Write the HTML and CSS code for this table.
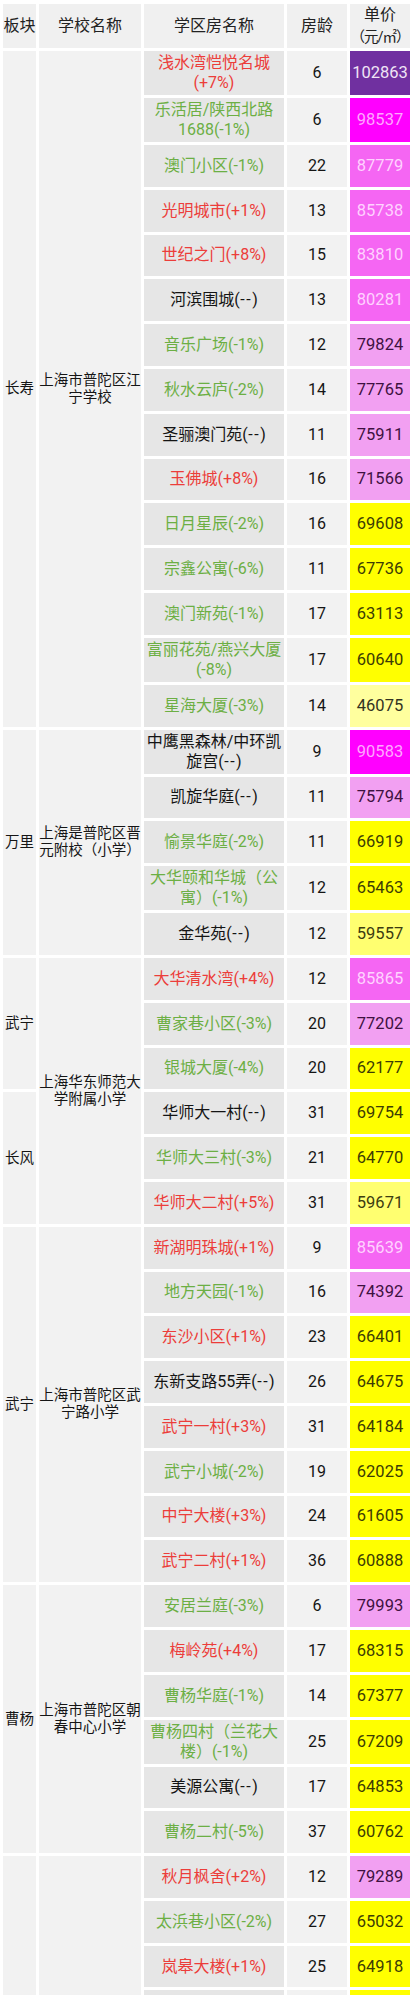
FILE: index.html
```html
<!DOCTYPE html>
<html lang="zh-CN">
<head>
<meta charset="utf-8">
<title>普陀区学区房</title>
<link rel="stylesheet" href="styles.css">
</head>
<body>
<div class="t">
  <div class="h c1">板块</div>
  <div class="h c2">学校名称</div>
  <div class="h c3">学区房名称</div>
  <div class="h c4">房龄</div>
  <div class="h c5"><span class="uw">单价<br><span class="u">（元/㎡）</span></span></div>

  <!-- 长寿 -->
  <div class="c1 s15">长寿</div>
  <div class="c2 s15"><span class="w">上海市普陀区江<br>宁学校</span></div>
  <div class="c3 up"><span class="w">浅水湾恺悦名城<br>(+7%)</span></div><div class="c4">6</div><div class="c5 p1">102863</div>
  <div class="c3 dn"><span class="w">乐活居/陕西北路<br>1688(-1%)</span></div><div class="c4">6</div><div class="c5 p2">98537</div>
  <div class="c3 dn">澳门小区(-1%)</div><div class="c4">22</div><div class="c5 p3">87779</div>
  <div class="c3 up">光明城市(+1%)</div><div class="c4">13</div><div class="c5 p3">85738</div>
  <div class="c3 up">世纪之门(+8%)</div><div class="c4">15</div><div class="c5 p3">83810</div>
  <div class="c3 eq"><span>河滨围城(<span class="dd">--</span>)</span></div><div class="c4">13</div><div class="c5 p3">80281</div>
  <div class="c3 dn">音乐广场(-1%)</div><div class="c4">12</div><div class="c5 p4">79824</div>
  <div class="c3 dn">秋水云庐(-2%)</div><div class="c4">14</div><div class="c5 p4">77765</div>
  <div class="c3 eq"><span>圣骊澳门苑(<span class="dd">--</span>)</span></div><div class="c4">11</div><div class="c5 p4">75911</div>
  <div class="c3 up">玉佛城(+8%)</div><div class="c4">16</div><div class="c5 p4">71566</div>
  <div class="c3 dn">日月星辰(-2%)</div><div class="c4">16</div><div class="c5 y1">69608</div>
  <div class="c3 dn">宗鑫公寓(-6%)</div><div class="c4">11</div><div class="c5 y1">67736</div>
  <div class="c3 dn">澳门新苑(-1%)</div><div class="c4">17</div><div class="c5 y1">63113</div>
  <div class="c3 dn"><span class="w">富丽花苑/燕兴大厦<br>(-8%)</span></div><div class="c4">17</div><div class="c5 y1">60640</div>
  <div class="c3 dn">星海大厦(-3%)</div><div class="c4">14</div><div class="c5 y3">46075</div>

  <!-- 万里 -->
  <div class="c1 s5">万里</div>
  <div class="c2 s5"><span class="w">上海是普陀区晋<br>元附校（小学）</span></div>
  <div class="c3 eq"><span class="w">中鹰黑森林/中环凯<br>旋宫(<span class="dd">--</span>)</span></div><div class="c4">9</div><div class="c5 p2">90583</div>
  <div class="c3 eq"><span>凯旋华庭(<span class="dd">--</span>)</span></div><div class="c4">11</div><div class="c5 p4">75794</div>
  <div class="c3 dn">愉景华庭(-2%)</div><div class="c4">11</div><div class="c5 y1">66919</div>
  <div class="c3 dn"><span class="w">大华颐和华城（公<br>寓）(-1%)</span></div><div class="c4">12</div><div class="c5 y1">65463</div>
  <div class="c3 eq"><span>金华苑(<span class="dd">--</span>)</span></div><div class="c4">12</div><div class="c5 y2">59557</div>

  <!-- 武宁 / 长风 -->
  <div class="c1 s3">武宁</div>
  <div class="c2 s6"><span class="w">上海华东师范大<br>学附属小学</span></div>
  <div class="c3 up">大华清水湾(+4%)</div><div class="c4">12</div><div class="c5 p3">85865</div>
  <div class="c3 dn">曹家巷小区(-3%)</div><div class="c4">20</div><div class="c5 p4">77202</div>
  <div class="c3 dn">银城大厦(-4%)</div><div class="c4">20</div><div class="c5 y1">62177</div>
  <div class="c1 s3">长风</div>
  <div class="c3 eq"><span>华师大一村(<span class="dd">--</span>)</span></div><div class="c4">31</div><div class="c5 y1">69754</div>
  <div class="c3 dn">华师大三村(-3%)</div><div class="c4">21</div><div class="c5 y1">64770</div>
  <div class="c3 up">华师大二村(+5%)</div><div class="c4">31</div><div class="c5 y2">59671</div>

  <!-- 武宁 -->
  <div class="c1 s8">武宁</div>
  <div class="c2 s8"><span class="w">上海市普陀区武<br>宁路小学</span></div>
  <div class="c3 up">新湖明珠城(+1%)</div><div class="c4">9</div><div class="c5 p3">85639</div>
  <div class="c3 dn">地方天园(-1%)</div><div class="c4">16</div><div class="c5 p4">74392</div>
  <div class="c3 up">东沙小区(+1%)</div><div class="c4">23</div><div class="c5 y1">66401</div>
  <div class="c3 eq"><span>东新支路55弄(<span class="dd">--</span>)</span></div><div class="c4">26</div><div class="c5 y1">64675</div>
  <div class="c3 up">武宁一村(+3%)</div><div class="c4">31</div><div class="c5 y1">64184</div>
  <div class="c3 dn">武宁小城(-2%)</div><div class="c4">19</div><div class="c5 y1">62025</div>
  <div class="c3 up">中宁大楼(+3%)</div><div class="c4">24</div><div class="c5 y1">61605</div>
  <div class="c3 up">武宁二村(+1%)</div><div class="c4">36</div><div class="c5 y1">60888</div>

  <!-- 曹杨 -->
  <div class="c1 s6">曹杨</div>
  <div class="c2 s6"><span class="w">上海市普陀区朝<br>春中心小学</span></div>
  <div class="c3 dn">安居兰庭(-3%)</div><div class="c4">6</div><div class="c5 p4">79993</div>
  <div class="c3 up">梅岭苑(+4%)</div><div class="c4">17</div><div class="c5 y1">68315</div>
  <div class="c3 dn">曹杨华庭(-1%)</div><div class="c4">14</div><div class="c5 y1">67377</div>
  <div class="c3 dn"><span class="w">曹杨四村（兰花大<br>楼）(-1%)</span></div><div class="c4">25</div><div class="c5 y1">67209</div>
  <div class="c3 eq"><span>美源公寓(<span class="dd">--</span>)</span></div><div class="c4">17</div><div class="c5 y1">64853</div>
  <div class="c3 dn">曹杨二村(-5%)</div><div class="c4">37</div><div class="c5 y1">60762</div>

  <!-- next group (cut off at the bottom) -->
  <div class="c1 s4"></div>
  <div class="c2 s4"></div>
  <div class="c3 up">秋月枫舍(+2%)</div><div class="c4">12</div><div class="c5 p4">79289</div>
  <div class="c3 dn">太浜巷小区(-2%)</div><div class="c4">27</div><div class="c5 y1">65032</div>
  <div class="c3 up">岚皋大楼(+1%)</div><div class="c4">25</div><div class="c5 y1">64918</div>
  <div class="c3"></div><div class="c4"></div><div class="c5 y1"></div>
</div>
</body>
</html>
```
FILE: styles.css
```css
html, body {
  margin: 0;
  padding: 0;
  background: #ffffff;
}

body {
  font-family: Roboto, "Noto Sans CJK SC", sans-serif;
  font-variant-ligatures: none;
  font-feature-settings: "liga" 0, "clig" 0, "calt" 0;
  font-kerning: none;
  color: #151515;
}

.t {
  display: grid;
  grid-template-columns: 33px 102px 140px 60px 60px;
  grid-template-rows:
    44px
    44px 44px repeat(11, 41.8px) 44px 41.8px
    44px 41.8px 41.8px 44px
    repeat(18, 41.8px)
    44px
    repeat(5, 41.8px) 4.4px;
  column-gap: 3px;
  row-gap: 3px;
  padding: 4px 4px 0 3px;
  width: 414px;
  box-sizing: border-box;
}

.t > div {
  display: flex;
  align-items: center;
  justify-content: center;
  text-align: center;
  overflow: hidden;
  background: #f2f2f2;
}

.w, .uw {
  display: block;
}

.dd {
  letter-spacing: 1.5px;
  margin-left: 0.5px;
}

.c1 { grid-column: 1; font-size: 14.5px; line-height: 17px; }
.c2 { grid-column: 2; font-size: 14.5px; line-height: 17px; }
.c3 {
  grid-column: 3;
  font-size: 16px;
  line-height: 20px;
  white-space: nowrap;
}
.t > .c3 { background: #e6e6e6; }
.c4 { grid-column: 4; font-size: 16px; line-height: 20px; }
.c5 { grid-column: 5; font-size: 16.5px; line-height: 20px; }

.t > .h {
  background: #f0f0f0;
  font-size: 16px;
  line-height: 22px;
  color: #222;
}
.u {
  font-size: 14.5px;
  letter-spacing: -1px;
  white-space: nowrap;
}

.s3 { grid-row: span 3; }
.s4 { grid-row: span 4; }
.s5 { grid-row: span 5; }
.s6 { grid-row: span 6; }
.s8 { grid-row: span 8; }
.s15 { grid-row: span 15; }

.up { color: #ec3d3a; }
.dn { color: #6caf44; }
.eq { color: #141414; }

.t > .p1 { background: #7030a0; color: #efe4f6; }
.t > .p2 { background: #ff00ff; color: #ffa6ff; }
.t > .p3 { background: #f566f3; color: #ffd2ff; }
.t > .p4 { background: #f2a0f2; color: #3e1141; }
.t > .y1 { background: #ffff00; color: #3c3c05; }
.t > .y2 { background: #ffff70; color: #3c3c10; }
.t > .y3 { background: #ffff9e; color: #333322; }
```
